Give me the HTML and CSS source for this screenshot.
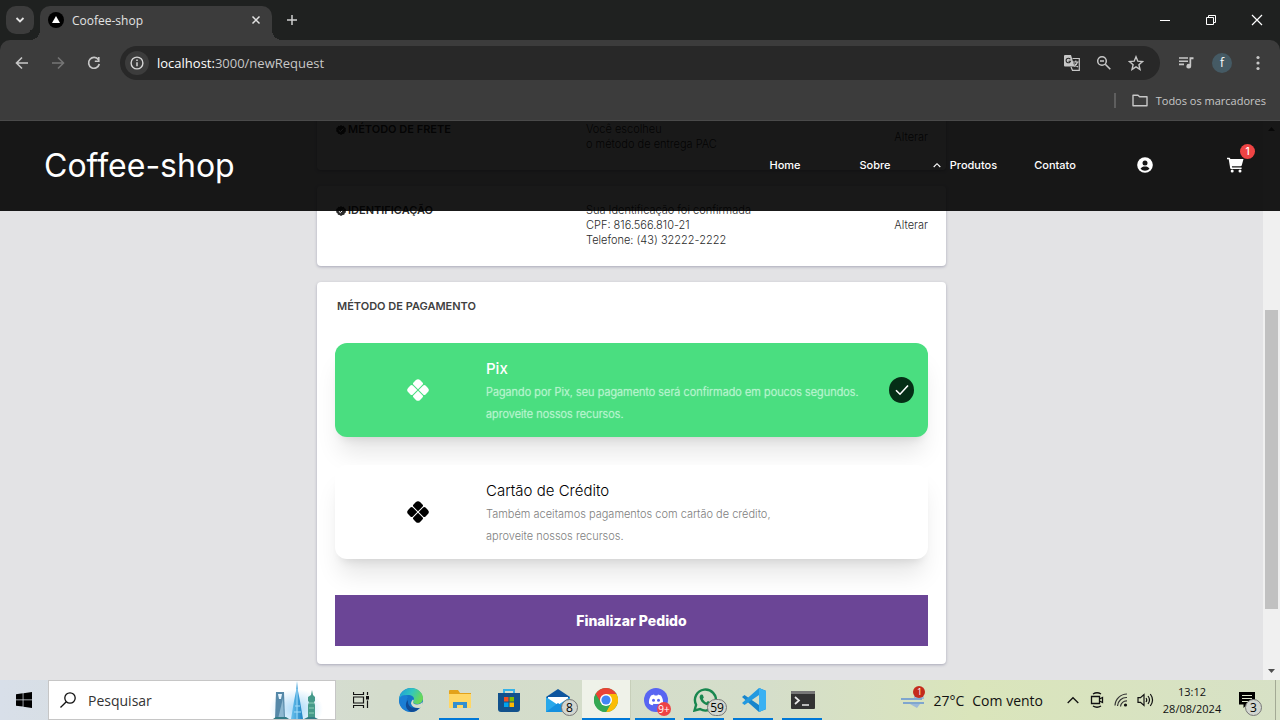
FILE: index.html
```html
<!DOCTYPE html>
<html lang="pt-BR">
<head>
<meta charset="utf-8">
<meta name="viewport" content="width=device-width, initial-scale=1">
<title>Coofee-shop</title>
<link rel="stylesheet" href="styles.css">
</head>
<body>
<div class="tabstrip">
  <button class="tab-search" aria-label="Pesquisar guias"><svg width="10" height="10" viewBox="0 0 10 10"><path d="M1.500 3l3.500 3.500L8.500 3" fill="none" stroke="#e3e3e3" stroke-width="1.800"/></svg></button>
  <div class="tab">
    <svg class="favicon" width="16" height="16" viewBox="0 0 16 16"><circle cx="8" cy="8" r="8" fill="#000"/><path d="M8 4l4 7H4z" fill="#fff"/></svg>
    <span class="tab-title">Coofee-shop</span>
    <button class="tab-close" aria-label="Fechar"><svg width="10" height="10" viewBox="0 0 10 10"><path d="M1.500 1.500l7 7M8.500 1.500l-7 7" stroke="#e3e3e3" stroke-width="1.500"/></svg></button>
  </div>
  <button class="new-tab" aria-label="Nova guia"><svg width="12" height="12" viewBox="0 0 12 12"><path d="M6 1v10M1 6h10" stroke="#d0d0d0" stroke-width="1.500"/></svg></button>
  <div class="window-controls">
    <button aria-label="Minimizar"><svg width="12" height="12" viewBox="0 0 12 12"><path d="M1 6.500h10" stroke="#fff"/></svg></button>
    <button aria-label="Restaurar"><svg width="12" height="12" viewBox="0 0 12 12"><path d="M1.500 3.500h7v7h-7zM3.500 3.500v-2h7v7h-2" fill="none" stroke="#fff"/></svg></button>
    <button aria-label="Fechar janela"><svg width="12" height="12" viewBox="0 0 12 12"><path d="M1 1l10 10M11 1L1 11" stroke="#fff" stroke-width="1.200"/></svg></button>
  </div>
</div>
<div class="browser-bar">
  <div class="toolbar">
    <button class="tool" aria-label="Voltar"><svg width="14" height="14" viewBox="0 0 14 14"><path d="M13 7H2M7 1.500L1.500 7 7 12.500" fill="none" stroke="#c7c7c7" stroke-width="1.600"/></svg></button>
    <button class="tool" aria-label="Avançar"><svg width="14" height="14" viewBox="0 0 14 14"><path d="M1 7h11M7 1.500L12.500 7 7 12.500" fill="none" stroke="#757575" stroke-width="1.600"/></svg></button>
    <button class="tool reload" aria-label="Recarregar"><svg width="14" height="14" viewBox="0 0 14 14"><path d="M11.500 3.800A5.400 5.400 0 1 0 12.300 8" fill="none" stroke="#c7c7c7" stroke-width="1.700"/><path d="M12.600 1v5H7.800V4.500h3.200V1z" fill="#c7c7c7"/></svg></button>
    <div class="address">
      <button class="site-info" aria-label="Informações do site"><svg width="14" height="14" viewBox="0 0 14 14"><circle cx="7" cy="7" r="5.900" fill="none" stroke="#d5d5d5" stroke-width="1.400"/><path d="M7 6.300v4M7 3.500v1.500" stroke="#d5d5d5" stroke-width="1.500"/></svg></button>
      <div class="url" role="textbox" aria-label="Endereço"><span class="host">localhost:</span>3000/newRequest</div>
      <button class="pill-tool" aria-label="Traduzir"><svg width="18" height="18" viewBox="0 0 18 18"><path d="M2 1h6l3.500 11.500H2a1 1 0 0 1-1-1V2a1 1 0 0 1 1-1z" fill="#c7c7c7"/><path d="M7.300 5.200A2.300 2.300 0 1 0 7.600 7.200H5.500" fill="none" stroke="#282828" stroke-width="1.100"/><path d="M9.500 4.500h6.800v11.800H9.500L8 13M10 8h5.500M12.800 6.500V8M14.500 8c-.5 2-2 3.500-3.500 4.500M11.500 9.500c.7 1.600 2 2.800 3.500 3.500" fill="none" stroke="#c7c7c7" stroke-width="1.200"/></svg></button>
      <button class="pill-tool" aria-label="Zoom"><svg width="16" height="16" viewBox="0 0 16 16"><circle cx="6" cy="6" r="4.300" fill="none" stroke="#c7c7c7" stroke-width="1.500"/><path d="M4 6h4M9.300 9.300l5 5" stroke="#c7c7c7" stroke-width="1.600"/></svg></button>
      <button class="pill-tool" aria-label="Adicionar aos favoritos"><svg width="16" height="16" viewBox="0 0 16 16"><path d="M8 1.800l1.800 4.400 4.700.4-3.600 3.100 1.100 4.700L8 11.900l-4 2.500 1.100-4.700-3.600-3.100 4.700-.4z" fill="none" stroke="#c7c7c7" stroke-width="1.400"/></svg></button>
    </div>
    <button class="tool" aria-label="Mídia"><svg width="16" height="14" viewBox="0 0 16 14"><path d="M1 2h9M1 5.200h9M1 8.400h5" stroke="#c7c7c7" stroke-width="1.600"/><path d="M11.500 1.200h4v2h-2.300v7a2.400 2.400 0 1 1-1.700-2.300z" fill="#c7c7c7"/></svg></button>
    <button class="tool" aria-label="Perfil"><span class="avatar">f</span></button>
    <button class="tool" aria-label="Menu"><svg width="4" height="16" viewBox="0 0 4 16"><g fill="#c7c7c7"><circle cx="2" cy="2.500" r="1.600"/><circle cx="2" cy="8" r="1.600"/><circle cx="2" cy="13.500" r="1.600"/></g></svg></button>
  </div>
  <div class="bookmarks">
    <span class="bookmarks-divider"></span>
    <button class="all-bookmarks"><svg width="16" height="13" viewBox="0 0 16 13"><path d="M1 1.200h5l1.600 1.600H15v9H1z" fill="none" stroke="#c7c7c7" stroke-width="1.400" stroke-linejoin="round"/></svg>Todos os marcadores</button>
  </div>
</div>

<div class="viewport">
  <header class="site-header">
    <a class="brand" href="#">Coffee-shop</a>
    <nav class="site-nav">
      <a href="#">Home</a>
      <a href="#">Sobre</a>
      <a class="has-menu" href="#"><svg width="8" height="6" viewBox="0 0 8 6"><path d="M.7 5L4 1.700 7.300 5" fill="none" stroke="#fff" stroke-width="1.100"/></svg>Produtos</a>
      <a href="#">Contato</a>
      <a href="#" aria-label="Conta"><svg width="16" height="16" viewBox="0 0 16 16"><circle cx="8" cy="8" r="7.800" fill="#fff"/><circle cx="8" cy="5.900" r="2.500" fill="#171717"/><path d="M3.500 11.800C4.500 9.900 6 9.500 8 9.500s3.500.4 4.500 2.300C11.300 13 9.800 13.700 8 13.700s-3.300-.7-4.500-1.900z" fill="#171717"/></svg></a>
      <a class="cart" href="#" aria-label="Carrinho"><svg width="17" height="16" viewBox="0 0 17 16"><path d="M0 .7h2.400c.4 0 .7.300.8.700l.1.500h13.200l-1.700 6.300c-.2.700-.7 1.100-1.400 1.100H4.900l.2 1.200h9.500v1.400H4c-.4 0-.7-.3-.8-.6L1.700 2.200H0z" fill="#fff"/><circle cx="5.200" cy="14" r="1.500" fill="#fff"/><circle cx="13" cy="14" r="1.500" fill="#fff"/></svg><span class="cart-count">1</span></a>
    </nav>
  </header>
  <main class="page">
    <section class="card step">
      <h2 class="step-title"><svg width="10" height="10" viewBox="0 0 20 20"><path d="M10 0l2.600 1.800 3.200-.2 1.300 2.900 2.700 1.700-.5 3.200.7 3.100-2.500 2-1 3-3.200.3L10 20l-3-1.900-3.100-.5-1-3L.2 12.500l.6-3.100-.4-3.200 2.600-1.800 1.300-2.900 3.100.3z" fill="#2b2b2b"/><path d="M5.500 10.300l3.200 3 5.800-6" fill="none" stroke="#fff" stroke-width="2"/></svg>MÉTODO DE FRETE</h2>
      <p class="step-text">Você escolheu<br>o método de entrega PAC</p>
      <button class="change">Alterar</button>
    </section>
    <section class="card step">
      <h2 class="step-title"><svg width="10" height="10" viewBox="0 0 20 20"><path d="M10 0l2.600 1.800 3.200-.2 1.300 2.900 2.700 1.700-.5 3.200.7 3.100-2.500 2-1 3-3.200.3L10 20l-3-1.900-3.100-.5-1-3L.2 12.500l.6-3.100-.4-3.200 2.600-1.800 1.300-2.900 3.100.3z" fill="#2b2b2b"/><path d="M5.500 10.300l3.200 3 5.800-6" fill="none" stroke="#fff" stroke-width="2"/></svg>IDENTIFICAÇÃO</h2>
      <p class="step-text">Sua Identificação foi confirmada<br>CPF: 816.566.810-21<br>Telefone: (43) 32222-2222</p>
      <button class="change">Alterar</button>
    </section>
    <form class="card payment">
      <h2 class="payment-title">MÉTODO DE PAGAMENTO</h2>
      <div class="options">
        <label class="option option-selected">
          <svg class="option-icon" width="22" height="22" viewBox="0 0 22 22"><g transform="rotate(45 11 11)" fill="currentColor"><path d="M5.800 2.500h3a1.700 1.700 0 0 1 1.700 1.700v6.300H4.200a1.700 1.700 0 0 1-1.700-1.700v-3a3.300 3.300 0 0 1 3.300-3.300z"/><path d="M13.200 2.500h3a3.300 3.300 0 0 1 3.300 3.300v3a1.700 1.700 0 0 1-1.700 1.700h-6.300V4.200a1.700 1.700 0 0 1 1.700-1.700z"/><path d="M4.200 11.500h6.300v6.300a1.700 1.700 0 0 1-1.700 1.700h-3a3.300 3.300 0 0 1-3.300-3.300v-3a1.700 1.700 0 0 1 1.700-1.700z"/><path d="M11.500 11.500h6.300a1.700 1.700 0 0 1 1.700 1.700v3a3.300 3.300 0 0 1-3.300 3.300h-3a1.700 1.700 0 0 1-1.700-1.700z"/></g></svg>
          <span class="option-body"><span class="option-name">Pix</span><span class="option-info">Pagando por Pix, seu pagamento será confirmado em poucos segundos.<br>aproveite nossos recursos.</span></span>
          <span class="mark"><input type="radio" name="payment" value="pix" checked><svg width="14" height="12" viewBox="0 0 14 12"><path d="M1 6.200l4 4L13 1.500" fill="none" stroke="#fff" stroke-width="1.600"/></svg></span>
        </label>
        <label class="option">
          <svg class="option-icon" width="22" height="22" viewBox="0 0 22 22"><g transform="rotate(45 11 11)" fill="currentColor"><path d="M5.800 2.500h3a1.700 1.700 0 0 1 1.700 1.700v6.300H4.200a1.700 1.700 0 0 1-1.700-1.700v-3a3.300 3.300 0 0 1 3.300-3.300z"/><path d="M13.200 2.500h3a3.300 3.300 0 0 1 3.300 3.300v3a1.700 1.700 0 0 1-1.700 1.700h-6.300V4.200a1.700 1.700 0 0 1 1.700-1.700z"/><path d="M4.200 11.500h6.300v6.300a1.700 1.700 0 0 1-1.700 1.700h-3a3.300 3.300 0 0 1-3.300-3.300v-3a1.700 1.700 0 0 1 1.700-1.700z"/><path d="M11.500 11.500h6.300a1.700 1.700 0 0 1 1.700 1.700v3a3.300 3.300 0 0 1-3.300 3.300h-3a1.700 1.700 0 0 1-1.700-1.700z"/></g></svg>
          <span class="option-body"><span class="option-name">Cartão de Crédito</span><span class="option-info">Também aceitamos pagamentos com cartão de crédito,<br>aproveite nossos recursos.</span></span>
          <span class="mark"><input type="radio" name="payment" value="card"></span>
        </label>
      </div>
      <button class="submit" type="button">Finalizar Pedido</button>
    </form>
  </main>
  <div class="scrollbar" aria-hidden="true">
    <svg class="scroll-arrow" width="17" height="17" viewBox="0 0 17 17"><path d="M5 10l3.500-4 3.500 4z" fill="#505050"/></svg>
    <span class="track-before"></span><span class="thumb"></span><span class="track-after"></span>
    <svg class="scroll-arrow" width="17" height="17" viewBox="0 0 17 17"><path d="M5 6l3.500 4L12 6z" fill="#505050"/></svg>
  </div>
</div>

<footer class="taskbar">
  <button class="start" aria-label="Iniciar"><svg width="16" height="16" viewBox="0 0 16 16"><path d="M0 2.300l6.700-1v6.200H0zM7.400 1.200L16 0v7.500H7.400zM0 8.300h6.700v6.300L0 13.700zM7.400 8.300H16V16l-8.600-1.200z" fill="#000"/></svg></button>
  <button class="search"><svg width="16" height="16" viewBox="0 0 16 16"><circle cx="10" cy="6" r="5.200" fill="none" stroke="#111" stroke-width="1.300"/><path d="M6.300 9.700L.5 15.500" stroke="#111" stroke-width="1.300"/></svg><span>Pesquisar</span>
    <svg class="skyline" width="56" height="38" viewBox="0 0 56 38"><defs><radialGradient id="glow"><stop offset="0" stop-color="#a8d8f8"/><stop offset="1" stop-color="#fff"/></radialGradient><linearGradient id="tower"><stop offset="0" stop-color="#6ac2ee"/><stop offset="1" stop-color="#1e83c4"/></linearGradient></defs><ellipse cx="27" cy="28" rx="27" ry="20" fill="url(#glow)"/><path d="M7 11h8l1 27H6z" fill="#5588a8"/><path d="M9 13h4l-1 5h-2z" fill="#e6f5ff"/><path d="M14 17l1 21H9z" fill="#8db7d0"/><path d="M28 0l1 10 2 10 3 18H22l3-18 2-10z" fill="url(#tower)"/><path d="M28 8v30M26 25h5M25 31h7" stroke="#a4ddfa"/><path d="M43 9l1 5 2 2v4l-1 1 1 3v14h-7V24l1-3-1-1v-4l3-2z" fill="#459a8a"/><path d="M40 22h5M40 27h5M40 32h5" stroke="#8ccfb7"/><path d="M4 38l3-2h10l3 2zM35 38l4-2h6l4 2z" fill="#327b86"/></svg>
  </button>
  <button class="task-view" aria-label="Visão de tarefas"><svg width="16" height="16" viewBox="0 0 16 16"><path d="M.5 0v2.500h10V0M.5 16v-2.500h10V16M.5 5h10v6H.500zM14.500 0v3M14.500 8.500V16" fill="none" stroke="#111" stroke-width="1.200"/><path d="M13 4h3v3.500h-3z" fill="#111"/></svg></button>
  <div class="apps">
    <button class="app" aria-label="Edge"><svg width="24" height="24" viewBox="0 0 24 24"><defs><linearGradient id="edgeTop" x2="1" y2=".4"><stop offset="0" stop-color="#1a98dd"/><stop offset=".55" stop-color="#32c6bd"/><stop offset="1" stop-color="#68d85a"/></linearGradient></defs><circle cx="12" cy="12" r="12" fill="#1474c8"/><path d="M0 11C1 4 6 0 12 0c7 0 12 5 12 10 0 4-3 6-6 6-3 0-4-1-4-2 0-.8 1-1 1-3 0-2-2-4-6-4-5 0-9 4-9 7z" fill="url(#edgeTop)"/><path d="M9 9c-3 4-2 10 4 15-8 0-13-5-13-12 1-5 6-6 9-3z" fill="#1b7ed4"/><path d="M9 12c-1 6 4 10 12 7-2 3-5 5-9 5-5-2-7-8-3-12z" fill="#104c96"/><path d="M14 14c0 1 1 2.500 4 2.500 2 0 4-.8 5.500-2.500l.5 5-2 .5c-4 1.500-9 0-10-4 0-1.500 1-3 2-4 1 .5.800 1.500 0 2.500z" fill="#d5ddca"/></svg></button>
    <button class="app running" aria-label="Explorador"><svg width="22" height="20" viewBox="0 0 22 20"><path d="M0 1a1 1 0 0 1 1-1h8l2 3h11v15H0z" fill="#e3a21a"/><path d="M0 4h22v14H0z" fill="#ffd766"/><path d="M4 18v-6h14v6h-4v-3H8v3z" fill="#338fd0"/></svg></button>
    <button class="app" aria-label="Loja"><svg width="24" height="24" viewBox="0 0 24 24"><path d="M7 6V2h10v4" fill="none" stroke="#36b3e8" stroke-width="2"/><path d="M1 5h22v16a3 3 0 0 1-3 3H4a3 3 0 0 1-3-3z" fill="#12518c"/><path d="M7 9h4.500v4.500H7z" fill="#f25022"/><path d="M12.500 9H17v4.500h-4.500z" fill="#7fba00"/><path d="M7 14.500h4.500V19H7z" fill="#00a4ef"/><path d="M12.500 14.500H17V19h-4.500z" fill="#ffb900"/></svg></button>
    <button class="app" aria-label="Email"><svg width="24" height="23" viewBox="0 0 24 23"><path d="M0 8l12-8 12 8v15H0z" fill="#0d559e"/><path d="M2 8h20v8H2z" fill="#fff"/><path d="M0 8l12 8L24 8v15H0z" fill="#28a8ea"/><path d="M0 23l12-9 12 9z" fill="#1490df"/></svg><span class="badge">8</span></button>
    <button class="app running active" aria-label="Chrome"><svg width="24" height="24" viewBox="0 0 24 24"><circle cx="12" cy="12" r="12" fill="#34a853"/><path d="M12 12L1.600 6A12 12 0 0 1 22.400 6z" fill="#ea4335"/><path d="M12 6h10.400A12 12 0 0 1 12 24l5.200-9z" fill="#fbbc05"/><path d="M1.600 6L7 15l5-3V6z" fill="#ea4335"/><path d="M1.600 6A12 12 0 0 0 12 24l5-9H7z" fill="#34a853"/><circle cx="12" cy="12" r="6" fill="#fff"/><circle cx="12" cy="12" r="4.600" fill="#4285f4"/></svg></button>
    <button class="app running" aria-label="Discord"><svg width="24" height="24" viewBox="0 0 24 24"><circle cx="12" cy="12" r="12" fill="#5865f2"/><path d="M7 7.500l3-1 .7 1h2.600l.7-1 3 1c1.600 2.500 2.300 5 2 8-1.300 1-2.500 1.500-3.600 1.700l-.9-1.500c-1.700.5-3.300.5-5 0l-.9 1.500C7.500 17 6.300 16.500 5 15.500c-.3-3 .4-5.500 2-8z" fill="#fff"/><circle cx="9.500" cy="12.300" r="1.500" fill="#5865f2"/><circle cx="14.500" cy="12.300" r="1.500" fill="#5865f2"/></svg><span class="badge badge-red">9+</span></button>
    <button class="app running" aria-label="WhatsApp"><svg width="24" height="24" viewBox="0 0 24 24"><path d="M1.500 22.500l1.600-5.700A10.500 10.500 0 1 1 7 21z" fill="none" stroke="#18874f" stroke-width="2.400"/><path d="M8 6.500l1.800.2 1 2.800-1 1.500c.8 1.600 2 2.800 3.600 3.500l1.500-1.600 2.800 1.400c0 2-1.500 3-3 3-4-.6-7.500-4-8.100-8 0-1.200.6-2.300 1.400-2.800z" fill="#18874f"/></svg><span class="badge badge-wide">59</span></button>
    <button class="app running" aria-label="VS Code"><svg width="24" height="24" viewBox="0 0 24 24"><path d="M17 0l7 3v18l-7 3L0 9l2.500-2L17 17z" fill="#1785cc"/><path d="M17 24l7-3V3l-7-3L0 15l2.500 2L17 7z" fill="#2299e0"/><path d="M17 0l7 3v18l-7 3z" fill="#3bb1f3"/></svg></button>
    <button class="app running" aria-label="Terminal"><svg width="24" height="18" viewBox="0 0 24 18"><path d="M0 1a1 1 0 0 1 1-1h22a1 1 0 0 1 1 1v16a1 1 0 0 1-1 1H1a1 1 0 0 1-1-1z" fill="#333"/><path d="M0 1a1 1 0 0 1 1-1h22a1 1 0 0 1 1 1v2H0z" fill="#777"/><path d="M4 6l4 3.500L4 13M11 14h7" fill="none" stroke="#e8e8e8" stroke-width="1.700"/></svg></button>
  </div>
  <button class="weather"><span class="weather-icon"><svg width="24" height="18" viewBox="0 0 24 18"><path d="M13 6a4 4 0 0 1 7-3q3 1 3 5H13zM9 13h10l-3 4z" fill="#9db9d8"/><path d="M0 8h21M2 12h21" fill="none" stroke="#7fa6cf" stroke-width="2"/></svg><span class="weather-alert">1</span></span><span>27°C</span><span>Com vento</span></button>
  <div class="tray">
    <button aria-label="Ícones ocultos"><svg width="12" height="8" viewBox="0 0 12 8"><path d="M.7 7L6 1.700 11.300 7" fill="none" stroke="#111" stroke-width="1.300"/></svg></button>
    <button aria-label="Reunir agora"><svg width="14" height="16" viewBox="0 0 14 16"><path d="M1.500 4.500h8v7h-8zM9.500 7l3-1.500v5l-3-1.500M3 2q4-2.500 8 0M3 14q4 2.500 8 0" fill="none" stroke="#111" stroke-width="1.300"/></svg></button>
    <button aria-label="Rede"><svg width="14" height="14" viewBox="0 0 14 14"><path d="M1 12.500A12 12 0 0 1 13 1M3.500 13A9 9 0 0 1 13 4.500M6.500 13.500A6 6 0 0 1 13 8" fill="none" stroke="#333" stroke-width="1.200"/><circle cx="11.500" cy="12" r="1.600" fill="#111"/></svg></button>
    <button aria-label="Volume"><svg width="17" height="14" viewBox="0 0 17 14"><path d="M1 4.700h2.500L7 1.500v11L3.500 9.300H1zM9 5q1.500 2 0 4M11 3q3 4 0 8M13.300 1q4.500 6 0 12" fill="none" stroke="#111" stroke-width="1.200"/></svg></button>
  </div>
  <button class="clock"><span>13:12</span><span>28/08/2024</span></button>
  <button class="notifications" aria-label="Notificações"><svg width="16" height="16" viewBox="0 0 16 16"><path d="M0 0h16v12.500H8L4.500 16v-3.500H0z" fill="#000"/><path d="M3 3.500h10M3 6.500h10M3 9.500h7" stroke="#dfe7cd"/></svg><span class="badge">3</span></button>
  <span class="show-desktop"></span>
</footer>
</body>
</html>
```
FILE: styles.css
```css
* { box-sizing: border-box; }

body {
  margin: 0;
  height: 100vh;
  display: flex;
  flex-direction: column;
  overflow: hidden;
  background: #e3e3e5;
  font-family: "Inter", sans-serif;
}

button {
  margin: 0;
  padding: 0;
  border: 0;
  background: none;
  color: inherit;
  font: inherit;
  display: flex;
  align-items: center;
  justify-content: center;
}

a { color: inherit; text-decoration: none; }
h2, p { margin: 0; }
svg { flex: none; display: block; }

/* Browser window */
.tabstrip, .browser-bar, .taskbar { font-family: "Open Sans", "Noto Sans", sans-serif; flex: none; }

.tabstrip {
  position: relative;
  z-index: 1;
  height: 40px;
  display: flex;
  align-items: flex-end;
  background: #1f2120;
}
.tab-search {
  width: 28px;
  height: 28px;
  margin: 0 6px 6px;
  border-radius: 10px;
  background: #3c3c3c;
}
.tab {
  position: relative;
  width: 232px;
  height: 34px;
  padding: 0 11px 6px 8px;
  display: flex;
  align-items: center;
  gap: 8px;
  border-radius: 10px 10px 0 0;
  background: #3c3c3c;
  color: #e3e3e3;
  font-size: 12px;
}
.tab::before, .tab::after {
  content: "";
  position: absolute;
  bottom: 0;
  width: 10px;
  height: 10px;
}
.tab::before { left: -10px; background: radial-gradient(circle at 0 0, #1f2120 10px, #3c3c3c 10px); }
.tab::after { right: -10px; background: radial-gradient(circle at 100% 0, #1f2120 10px, #3c3c3c 10px); }
.tab-title { flex: 1; }
.new-tab { width: 28px; height: 28px; margin: 0 0 6px 6px; }
.window-controls { display: flex; margin-left: auto; align-self: stretch; }
.window-controls button { width: 46px; }

.browser-bar {
  border-bottom: 1px solid #4a4a4a;
  background: #3c3c3c;
  border-radius: 10px 10px 0 0;
  box-shadow: 0 -10px 0 #1f2120;
  color: #c7c7c7;
}
.toolbar { display: flex; align-items: center; padding: 6px 4px 0; height: 40px; }
.tool { width: 36px; height: 34px; }
.reload { margin-right: 8px; }
.address {
  flex: 1;
  height: 34px;
  margin-right: 8px;
  padding: 0 8px 0 5px;
  display: flex;
  align-items: center;
  border-radius: 17px;
  background: #282828;
}
.site-info { width: 24px; height: 24px; border-radius: 50%; background: #3c3c3c; }
.url { flex: 1; padding-left: 8px; font-size: 13px; color: #c7c7c7; }
.host { color: #fff; }
.pill-tool { width: 32px; height: 32px; }
.avatar {
  width: 20px;
  height: 20px;
  border-radius: 50%;
  background: #455a64;
  color: #fff;
  font-size: 12px;
  line-height: 20px;
}
.bookmarks {
  height: 40px;
  padding-right: 14px;
  display: flex;
  align-items: center;
  justify-content: flex-end;
  gap: 16px;
  font-size: 11px;
}
.bookmarks-divider { width: 2px; height: 15px; background: #5e5e5e; }
.all-bookmarks { gap: 8px; }

/* Site */
.viewport {
  position: relative;
  flex: 1;
  min-height: 0;
  display: flex;
  overflow: hidden;
}
.site-header {
  position: absolute;
  z-index: 2;
  top: 0;
  left: 0;
  right: 0;
  height: 90px;
  padding: 0 0 2px 44px;
  display: flex;
  align-items: center;
  justify-content: space-between;
  background: rgba(0, 0, 0, 0.9);
  color: #fff;
}
.brand { font-size: 32px; }
.site-nav { display: flex; font-size: 11px; font-weight: 500; }
.site-nav a {
  width: 90px;
  height: 18px;
  display: flex;
  align-items: center;
  justify-content: center;
}
.site-nav .has-menu { gap: 9px; }
.cart { position: relative; }
.cart-count {
  position: absolute;
  top: -12px;
  right: 25px;
  width: 15px;
  height: 15px;
  border-radius: 50%;
  background: #ef4444;
  font-size: 10px;
  line-height: 15px;
  text-align: center;
}

.page {
  flex: 1;
  margin-top: -16px;
  display: flex;
  flex-direction: column;
  align-items: center;
  gap: 16px;
}
.card {
  width: 629px;
  max-width: 100%;
  padding: 18px;
  border-radius: 4px;
  background: #fff;
  box-shadow: 0 1px 3px rgba(60, 60, 100, 0.35);
}
.step {
  padding-top: 17px;
  padding-left: 19px;
  display: grid;
  grid-template-columns: 250px 1fr auto;
  align-items: center;
  color: #2b2b2b;
  font-size: 11px;
  line-height: 15px;
}
.step-title {
  align-self: start;
  display: flex;
  align-items: center;
  gap: 2px;
  font-size: 11px;
  font-weight: 600;
}
.step-text { font-weight: 300; }
.change { font-weight: 300; }

.payment { display: flex; flex-direction: column; }
.payment-title {
  padding-left: 2px;
  color: #404040;
  font-size: 11px;
  line-height: 13px;
  font-weight: 600;
}
.options {
  margin: 30px 0 36px;
  display: grid;
  gap: 28px;
}
.option {
  min-height: 94px;
  padding: 0 14px 0 72px;
  display: flex;
  align-items: center;
  border-radius: 12px;
  background: #fff;
  color: #000;
  box-shadow: 0 20px 25px -5px rgba(0, 0, 0, 0.1), 0 8px 10px -6px rgba(0, 0, 0, 0.1);
}
.option-body { flex: 1; padding: 2px 0 0 57px; font-weight: 300; }
.option-name { display: block; font-size: 15px; line-height: 24px; }
.option-info { display: block; color: #808080; font-size: 11px; line-height: 22px; }
.option-selected { background: #4ade80; color: #fff; }
.option-selected .option-name { font-weight: 500; }
.option-selected .option-info { color: #b9f4cf; text-shadow: 0 0 1px #b9f4cf; }
.mark { display: grid; place-items: center; }
.mark > * { grid-area: 1 / 1; }
.mark input {
  appearance: none;
  width: 25px;
  height: 26px;
  margin: 0;
  border-radius: 50%;
}
.mark input:checked { background: #052e16; }
.mark svg { z-index: 1; }
.submit {
  height: 51px;
  background: #6b4596;
  color: #fff;
  font-size: 14px;
  font-weight: 800;
}

.scrollbar {
  width: 17px;
  display: flex;
  flex-direction: column;
  align-items: center;
  background: #f0f0f0;
}
.track-before { flex: 172; }
.thumb { flex: 299; width: 13px; background: #c1c1c1; }
.track-after { flex: 54; }

/* Taskbar */
.taskbar {
  height: 40px;
  display: flex;
  background: linear-gradient(90deg, #d8dfe9 0%, #d4dccc 30%, #d5deca 60%, #dae5bb 76%, #d7e1c6 100%);
  color: #111;
  font-size: 14px;
}
.start { width: 48px; }
.search {
  width: 288px;
  padding-left: 11px;
  justify-content: flex-start;
  gap: 12px;
  border: 1px solid #c6c6c6;
  background: #fff;
  color: #333;
}
.skyline { margin-left: auto; margin-right: 10px; }
.task-view { width: 50px; }
.apps { display: flex; }
.app { position: relative; width: 49px; }
.running::after {
  content: "";
  position: absolute;
  left: 4px;
  right: 5px;
  bottom: 0;
  height: 2px;
  background: #0078d7;
}
.active { background: #eff2e9; border-right: 1px solid #c7cfba; }
.active::after { left: 0; right: 0; }
.badge {
  position: absolute;
  right: 4px;
  bottom: 4px;
  width: 17px;
  height: 17px;
  border: 1px solid #777;
  border-radius: 9px;
  background: #d2d6d0;
  color: #000;
  font-size: 12px;
  line-height: 15px;
  text-align: center;
}
.badge-wide { right: 2px; width: 20px; }
.badge-red {
  right: 9px;
  width: 14px;
  height: 14px;
  border: 0;
  background: #ed4245;
  color: #fff;
  font-size: 10px;
  line-height: 14px;
}
.weather { margin-left: auto; margin-right: 18px; gap: 8px; }
.weather-icon { position: relative; }
.weather-alert {
  position: absolute;
  top: -5px;
  right: 0;
  width: 12px;
  height: 12px;
  border-radius: 50%;
  background: #c42b1c;
  color: #fff;
  font-size: 9px;
  line-height: 12px;
}
.tray { display: flex; }
.tray button { width: 24px; }
.clock { width: 70px; flex-direction: column; font-size: 11px; line-height: 17px; }
.notifications { position: relative; width: 40px; }
.notifications .badge { right: 5px; }
.show-desktop { width: 5px; margin-left: 8px; border-left: 1px solid #a3aa95; }
```
